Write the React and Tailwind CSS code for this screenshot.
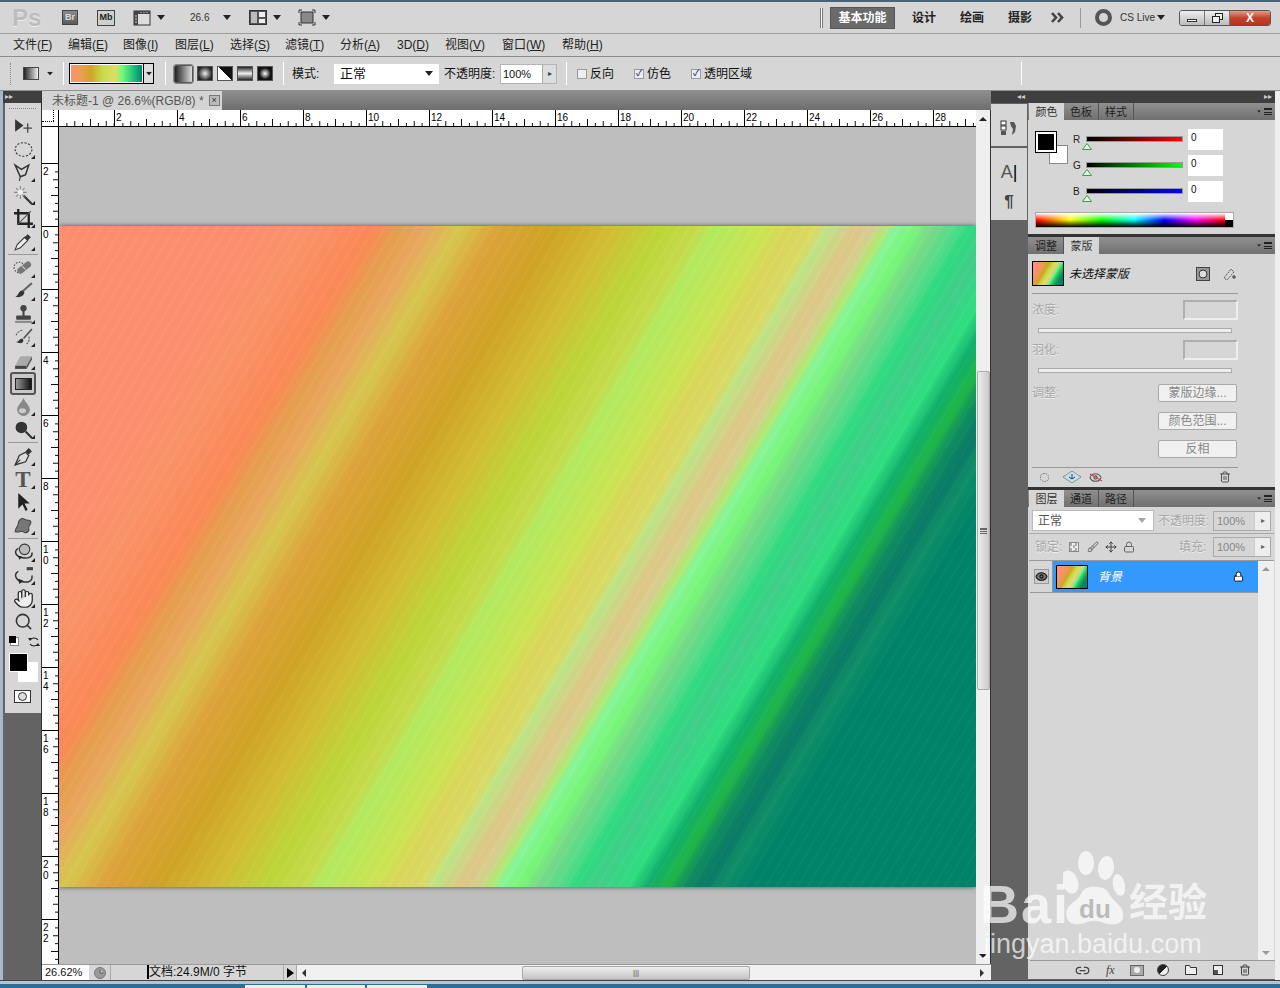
import React from 'react';
import { Hand, Search, Lock, Trash2, Eye, Link2, Move, Brush } from 'lucide-react';

const docGradient = "bg-[repeating-linear-gradient(121deg,rgba(255,255,255,.018)_0px,rgba(255,255,255,.018)_2px,rgba(0,0,0,.012)_2px,rgba(0,0,0,.012)_9px),linear-gradient(121deg,#ff9070_0%,#ff9070_15%,#fb9468_19%,#fd8a58_24%,#e8a050_26%,#eba860_28%,#d8c850_30.6%,#dfa43c_33.5%,#d0a526_37.8%,#d4bd35_42%,#bed83a_46%,#c8dc4c_48.6%,#b4ec60_50%,#cee654_54%,#dcd85c_55.7%,#dcdc66_57.7%,#bfe688_58.7%,#e0c888_60.8%,#d8d090_62%,#b6ea74_63%,#88f898_63.8%,#78f878_65.3%,#78dc88_66.6%,#52de8c_68.4%,#30dc80_69.4%,#40d08c_71.2%,#30e080_73.5%,#10b06c_75%,#20b848_76.5%,#109060_77.7%,#0a7a68_79.3%,#109068_80.6%,#00846a_82.6%,#00846a_100%)]";

const thumbGradient = "bg-[linear-gradient(121deg,#ff9070_0%,#ff9070_20%,#d0a526_38%,#c8dc4c_48%,#e0dc66_57%,#e0c888_60%,#78f878_65%,#30dc80_70%,#20b848_76%,#00846a_85%)]";

const menus = [
  ['文件', 'F', 'w-[55px]'], ['编辑', 'E', 'w-[55px]'], ['图像', 'I', 'w-[52px]'], ['图层', 'L', 'w-[55px]'],
  ['选择', 'S', 'w-[55px]'], ['滤镜', 'T', 'w-[55px]'], ['分析', 'A', 'w-[57px]'], ['3D', 'D', 'w-[48px]'],
  ['视图', 'V', 'w-[57px]'], ['窗口', 'W', 'w-[60px]'], ['帮助', 'H', 'w-[60px]'],
];

const DownArrow = ({ className = '' }) => (
  <svg width="8" height="5" viewBox="0 0 8 5" className={className}><path d="M0 0h8L4 5z" fill="#222" /></svg>
);

const Sep = ({ className = '' }) => <div className={`w-px self-stretch bg-[#a4a4a4] border-r border-white ${className}`} />;

const Check = ({ on, label, className = '' }) => (
  <label className={`flex items-center gap-[3px] ${className}`}>
    <span className="w-[10px] h-[10px] bg-[#eee] border border-[#9a9a9a] flex items-center justify-center text-[#3c4d8e] text-[9px] leading-none font-bold">{on ? '✓' : ''}</span>
    <span className="text-[12px] text-[#111]">{label}</span>
  </label>
);

function AppBar() {
  return (
    <div className="h-[32px] shrink-0 flex items-center bg-[#d6d6d6] border-b border-[#9c9c9c] shadow-[0_1px_0_#eee]">
      <span className="ml-[12px] w-[50px] text-[24px] font-bold text-[#bdbdbd] [text-shadow:0_1px_0_#eee] leading-none">Ps</span>
      <span className="w-[16px] h-[15px] bg-[linear-gradient(#8a8a8a,#5c5c5c)] border border-[#444] text-[9px] text-[#ddd] font-bold flex items-center justify-center">Br</span>
      <span className="ml-[19px] w-[18px] h-[16px] bg-[#cfcfcf] border border-[#444] text-[9px] text-[#222] font-bold flex items-center justify-center">Mb</span>
      <svg width="18" height="16" viewBox="0 0 18 16" className="ml-[18px]"><rect x="1" y="1" width="16" height="14" fill="#ddd" stroke="#333" /><rect x="1" y="1" width="16" height="3" fill="#444" /><rect x="1" y="1" width="4" height="14" fill="#444" /><path d="M2 6h2M2 9h2M2 12h2M8 2v1M11 2v1M14 2v1" stroke="#ddd" /></svg>
      <DownArrow className="ml-[6px]" />
      <span className="ml-[25px] text-[10px] text-[#333] w-[30px]">26.6</span>
      <DownArrow className="ml-[3px]" />
      <svg width="18" height="15" viewBox="0 0 18 15" className="ml-[18px]"><rect x=".5" y=".5" width="17" height="14" fill="#555" stroke="#333" /><rect x="10" y="2" width="6" height="5" fill="#eee" /><rect x="10" y="9" width="6" height="4" fill="#eee" /><rect x="2" y="2" width="6" height="11" fill="#bbb" /></svg>
      <DownArrow className="ml-[6px]" />
      <svg width="18" height="17" viewBox="0 0 18 17" className="ml-[17px]"><path d="M1 4V1h3M14 1h3v3M17 13v3h-3M4 16H1v-3" fill="none" stroke="#333" /><rect x="3" y="3" width="12" height="11" fill="#888" stroke="#333" /></svg>
      <DownArrow className="ml-[6px]" />
      <div className="ml-[490px] w-[3px] h-[20px] border-x border-[#777] bg-white" />
      <span className="ml-[7px] w-[65px] h-[22px] bg-[#6a6a6a] border border-[#555] text-white font-bold text-[12px] flex items-center justify-center">基本功能</span>
      <span className="ml-[17px] text-[12px] font-bold text-[#222] w-[48px]">设计</span>
      <span className="text-[12px] font-bold text-[#222] w-[48px]">绘画</span>
      <span className="text-[12px] font-bold text-[#222] w-[43px]">摄影</span>
      <svg width="15" height="11" viewBox="0 0 15 11" className="mr-[14px]"><path d="M1 1l4 4.5L1 10M7 1l4 4.5L7 10" fill="none" stroke="#444" strokeWidth="2.6" /></svg>
      <div className="w-px h-[20px] bg-[#999]" />
      <span className="ml-[14px] w-[17px] h-[17px] rounded-full border-[4px] border-[#555]" />
      <span className="ml-[8px] text-[10px] text-[#333]">CS Live</span>
      <DownArrow className="ml-[2px]" />
      <div className="ml-[14px] h-[16px] w-[92px] flex rounded-[3px] border border-[#555] overflow-hidden">
        <span className="w-[25px] bg-[linear-gradient(#eee,#bbb)] border-r border-[#777] flex items-end justify-center pb-[3px]"><span className="w-[10px] h-[3px] bg-white border border-[#333]" /></span>
        <span className="w-[25px] bg-[linear-gradient(#eee,#bbb)] border-r border-[#777] flex items-center justify-center">
          <svg width="11" height="10" viewBox="0 0 11 10"><rect x="3.5" y=".5" width="7" height="6" fill="#eee" stroke="#222" /><rect x=".5" y="3.5" width="7" height="6" fill="#eee" stroke="#222" /></svg>
        </span>
        <span className="flex-1 bg-[linear-gradient(#e89a88,#c2422c_50%,#b8331f)] text-white font-bold text-[12px] leading-none flex items-center justify-center">X</span>
      </div>
    </div>
  );
}

function MenuBar() {
  return (
    <div className="h-[22px] shrink-0 flex items-center pl-[13px] bg-[#d6d6d6] text-[12px] text-[#222]">
      {menus.map(([name, key, w]) => (
        <span key={name} className={`${w} whitespace-nowrap`}>{name}(<span className="underline">{key}</span>)</span>
      ))}
    </div>
  );
}

function OptionsBar() {
  return (
    <div className="h-[35px] shrink-0 flex items-center bg-[#d6d6d6] border-y border-[#8e8e8e] pl-[10px] py-[5px] text-[12px] text-[#111]">
      <div className="w-[2px] h-[22px] border-l border-dotted border-[#888]" />
      <span className="ml-[11px] w-[16px] h-[13px] border border-[#444] bg-[linear-gradient(90deg,#222,#eee)]" />
      <DownArrow className="ml-[7px] scale-75" />
      <Sep className="ml-[9px]" />
      <div className="ml-[5px] w-[85px] h-[21px] flex border border-black bg-[#ddd]">
        <span className="w-[73px] bg-[linear-gradient(90deg,#ff9070,#e8a050_15%,#d0a526_28%,#c8dc4c_45%,#e0dc66_62%,#78f878_72%,#20c080_88%,#00846a)] border border-white" />
        <span className="flex-1 flex items-center justify-center border-l border-black"><DownArrow className="scale-75" /></span>
      </div>
      <Sep className="ml-[11px]" />
      <div className="ml-[8px] flex gap-[4px] items-center">
        <span className="w-[19px] h-[18px] border border-[#555] rounded-[2px] bg-[linear-gradient(90deg,#222,#ddd)] outline-1 outline-[#888]" />
        <span className="w-[16px] h-[15px] bg-[radial-gradient(circle,#eee,#222_75%)] border border-[#555]" />
        <span className="w-[16px] h-[15px] bg-[linear-gradient(45deg,#fff_50%,#111_50%)] border border-[#555]" />
        <span className="w-[16px] h-[15px] bg-[linear-gradient(#222,#eee,#222)] border border-[#555]" />
        <span className="w-[16px] h-[15px] bg-[radial-gradient(circle,#fff,#111_60%)] border border-[#555]" />
      </div>
      <Sep className="ml-[10px]" />
      <span className="ml-[8px] w-[42px]">模式:</span>
      <div className="w-[105px] h-[20px] bg-white flex items-center justify-between px-[6px] text-[13px]"><span>正常</span><DownArrow /></div>
      <span className="ml-[5px] w-[56px]">不透明度:</span>
      <div className="w-[57px] h-[20px] flex bg-white border border-[#b4b4b4]">
        <span className="w-[41px] pl-[2px] text-[11px] leading-[18px]">100%</span>
        <span className="flex-1 bg-[#ddd] border-l border-[#aaa] text-[8px] text-[#345] flex items-center justify-center">▸</span>
      </div>
      <Sep className="ml-[9px]" />
      <Check label="反向" className="ml-[10px] w-[57px]" />
      <Check on label="仿色" className="w-[57px]" />
      <Check on label="透明区域" className="w-[79px]" />
      <Sep className="ml-[251px]" />
    </div>
  );
}

const Tool = ({ children, corner = true }) => (
  <div className="relative h-[23px] w-[26px] mx-auto flex items-center justify-center">
    {children}
    {corner && <span className="absolute right-[1px] bottom-[2px] w-0 h-0 border-l-[4px] border-l-transparent border-b-[4px] border-b-[#222]" />}
  </div>
);

const ToolSep = () => <div className="h-[1px] mt-[1px] mb-[2px] mx-[3px] bg-[#999]" />;

const Ico = ({ children }) => <svg width="21" height="21" viewBox="0 0 20 20">{children}</svg>;

function Toolbar() {
  return (
    <div className="ml-[1px] w-[36px] h-[610px] bg-[#d6d6d6] pt-[12px] flex flex-col relative">
      <div className="absolute top-[5px] left-[4px] w-[27px] border-t border-dotted border-[#888]" />
      <Tool corner={false}><Ico><path d="M2 3v12l8-6z" fill="#333" /><path d="M14 7v9M10 11.5h8" stroke="#444" strokeWidth="1.2" /></Ico></Tool>
      <Tool><Ico><ellipse cx="10" cy="10" rx="8" ry="6.5" fill="none" stroke="#333" strokeDasharray="2 1.5" /></Ico></Tool>
      <Tool><Ico><path d="M2 3l6 4 7-4-3 9-5 2z" fill="none" stroke="#333" strokeWidth="1.4" /><path d="M7 14l-1 4" stroke="#333" /></Ico></Tool>
      <Tool><Ico><path d="M10 10l8 8" stroke="#333" strokeWidth="2" /><path d="M7 1v12M1 7h12M3 3l8 8M11 3l-8 8" stroke="#888" /><circle cx="7" cy="7" r="2.6" fill="#eee" /></Ico></Tool>
      <Tool><Ico><path d="M5 1v14h14M1 5h14v14" fill="none" stroke="#222" strokeWidth="2.2" /><path d="M4 16L17 3" stroke="#555" /></Ico></Tool>
      <Tool><Ico><path d="M2 18l2-5 7-7 3 3-7 7z" fill="#eee" stroke="#333" /><path d="M11 6l3-3 3 3-3 3z" fill="#333" /></Ico></Tool>
      <ToolSep />
      <Tool><Ico><circle cx="6" cy="9" r="5" fill="none" stroke="#444" strokeDasharray="1.4 1.4" /><rect x="3" y="6.5" width="15" height="6" rx="3" transform="rotate(-38 10 9)" fill="#777" /><path d="M8 7l4 4" stroke="#ccc" /></Ico></Tool>
      <Tool><Ico><path d="M18 2L9 10" stroke="#666" strokeWidth="2" /><path d="M2 15c3 0 3-6 7-6l2 2c-1 4-5 5-9 4z" fill="#333" /></Ico></Tool>
      <Tool><Ico><circle cx="10" cy="4" r="3" fill="#444" /><rect x="9" y="6" width="2" height="6" fill="#444" /><rect x="3" y="11" width="14" height="4" rx="1" fill="#444" /><rect x="2" y="16" width="16" height="2" fill="#888" /></Ico></Tool>
      <Tool><Ico><path d="M3 14c2 1 3-3 6-3l1 2c-1 3-4 3-7 1z" fill="#333" /><path d="M18 2l-8 9" stroke="#555" strokeWidth="1.6" /><path d="M3 8a8 7 0 0 1 6-5M15 9a6 6 0 0 1-2 7" fill="none" stroke="#555" strokeDasharray="2 1" /></Ico></Tool>
      <Tool><Ico><path d="M2 15l5-9h11l-5 9z" fill="#aaa" /><path d="M2 15h11v3H2z" fill="#444" /><path d="M13 15l5-9v3l-5 9z" fill="#555" /></Ico></Tool>
      <div className="relative h-[23px] flex items-center justify-center">
        <span className="w-[26px] h-[23px] rounded-[3px] border-2 border-[#555] bg-[#c8c8c8] flex items-center justify-center"><span className="w-[17px] h-[12px] bg-[linear-gradient(90deg,#999,#111)] border border-[#222]" /></span>
      </div>
      <Tool><Ico><path d="M10 2c2 5 6 7 6 11a6 6 0 0 1-12 0c0-4 4-6 6-11z" fill="#888" /><ellipse cx="9" cy="14" rx="3.4" ry="2.4" fill="#ccc" /></Ico></Tool>
      <Tool><Ico><circle cx="8" cy="8" r="5.5" fill="#333" /><path d="M12 12l6 6" stroke="#333" strokeWidth="2" /></Ico></Tool>
      <ToolSep />
      <Tool><Ico><path d="M2 18l4-9 6-3 3 3-3 6z" fill="#ddd" stroke="#333" strokeWidth="1.2" /><path d="M12 5l3-3 3 3-3 3z" fill="#333" /><path d="M2 18l5-5" stroke="#333" /></Ico></Tool>
      <Tool><span className="text-[23px] leading-none font-bold text-[#555] [font-family:'Liberation_Serif',serif]">T</span></Tool>
      <Tool><Ico><path d="M5 1v15l4-4 3 6 2-1-3-6h5z" fill="#222" /></Ico></Tool>
      <Tool><Ico><path d="M2 16c0-4 3-5 3-8s3-6 6-4 6 0 6 3-3 3-2 6-3 5-5 3-3 1-8 0z" fill="#777" stroke="#444" /></Ico></Tool>
      <ToolSep />
      <Tool><Ico><circle cx="11" cy="7" r="5" fill="#bbb" stroke="#333" /><path d="M5 6C0 9 3 14 9 15s10-1 9-5" fill="none" stroke="#333" strokeWidth="1.4" /><path d="M5 13l4 1-3 3z" fill="#222" /></Ico></Tool>
      <Tool><Ico><path d="M5 6C0 9 3 15 9 16s10-1 9-6" fill="none" stroke="#333" strokeWidth="1.4" /><path d="M5 13l5 2-4 3z" fill="#222" /><rect x="13" y="2" width="6" height="3" fill="#444" /></Ico></Tool>
      <Tool><Hand size={21} strokeWidth={1.4} color="#222" fill="#eee" /></Tool>
      <Tool corner={false}><Search size={19} strokeWidth={2} color="#333" /></Tool>
      <div className="h-[15px] mt-[1px] flex items-center pl-[5px] gap-[9px]">
        <span className="relative w-[9px] h-[9px] bg-white border border-[#888]"><span className="absolute -left-[2px] -top-[2px] w-[7px] h-[7px] bg-black" /></span>
        <svg width="12" height="12" viewBox="0 0 12 12"><path d="M2 4a5 5 0 0 1 8 0M10 8a5 5 0 0 1-8 0" fill="none" stroke="#222" strokeWidth="1.2" /><path d="M0 2l4 0-2 3zM12 10l-4 0 2-3z" fill="#222" /></svg>
      </div>
      <div className="relative h-[30px] mt-[4px]">
        <span className="absolute left-[13px] top-[9px] w-[20px] h-[20px] bg-white" />
        <span className="absolute left-[4px] top-0 w-[19px] h-[19px] bg-black border border-white" />
      </div>
      <span className="mt-[7px] ml-[9px] w-[17px] h-[13px] bg-white border border-[#333] flex items-center justify-center"><span className="w-[9px] h-[9px] rounded-full border border-[#333] bg-[#ddd]" /></span>
    </div>
  );
}

const Ticks = () => (
  <svg width="63" height="7" className="absolute left-0 bottom-0">
    {[1, 2, 3, 4, 5, 6, 7].map(i => (
      <line key={i} x1={i * 7.875} x2={i * 7.875} y1={i === 4 ? 0 : i % 2 ? 4 : 2} y2={7} stroke="#111" />
    ))}
  </svg>
);

const VTicks = () => (
  <svg width="7" height="63" className="absolute right-0 top-0">
    {[1, 2, 3, 4, 5, 6, 7].map(i => (
      <line key={i} y1={i * 7.875} y2={i * 7.875} x1={i === 4 ? 0 : i % 2 ? 4 : 2} x2={7} stroke="#111" />
    ))}
  </svg>
);

const hLabels = [2, 4, 6, 8, 10, 12, 14, 16, 18, 20, 22, 24, 26, 28];
const vLabels = ['2', '0', '2', '4', '6', '8', '10', '12', '14', '16', '18', '20', '22'];

function Canvas() {
  return (
    <div className="flex-1 flex flex-col min-w-0">
      <div className="h-[17px] flex bg-white border-b border-black overflow-hidden shrink-0">
        <div className="w-[17px] shrink-0 border-r border-black relative">
          <span className="absolute left-0 right-[4px] top-[11px] border-t border-dotted border-black" />
          <span className="absolute right-[4px] top-0 bottom-[5px] border-l border-dotted border-black" />
        </div>
        <div className="w-[55px] shrink-0 relative overflow-hidden"><Ticks /></div>
        {hLabels.map(n => (
          <div key={n} className="w-[63px] shrink-0 relative border-l border-black pl-[1px] pt-[3px] text-[10px] leading-[10px] text-black">
            {n}
            <Ticks />
          </div>
        ))}
      </div>
      <div className="flex-1 flex min-h-0">
        <div className="w-[17px] shrink-0 bg-white border-r border-black overflow-hidden flex flex-col">
          <div className="h-[36px] shrink-0" />
          {vLabels.map((n, i) => (
            <div key={i} className="h-[63px] shrink-0 relative border-t border-black pl-[1px] pt-[2px] text-[10px] leading-[11px] text-black">
              {n.split('').map((c, j) => <div key={j}>{c}</div>)}
              <VTicks />
            </div>
          ))}
        </div>
        <div className="flex-1 bg-[#bebebe] flex flex-col overflow-hidden pt-[99px]">
          <div className={`h-[661px] shrink-0 ${docGradient} shadow-[0_0_5px_rgba(0,0,0,.6)]`} />
        </div>
      </div>
    </div>
  );
}

function VScroll() {
  return (
    <div className="w-[15px] bg-[#efefef] border-r border-[#333] flex flex-col items-center">
      <span className="mt-[7px] w-0 h-0 border-x-[4px] border-x-transparent border-b-[4px] border-b-[#222]" />
      <div className="mt-[250px] w-[13px] h-[319px] rounded-[2px] border border-[#aaa] bg-[linear-gradient(90deg,#eee,#c8c8c8)] flex items-center justify-center">
        <span className="w-[7px] h-[6px] border-y border-[#666] bg-[linear-gradient(#666_1px,transparent_1px)] bg-[length:100%_2px]" />
      </div>
      <span className="mt-auto mb-[6px] w-0 h-0 border-x-[4px] border-x-transparent border-t-[4px] border-t-[#222]" />
    </div>
  );
}

function StatusBar() {
  return (
    <div className="h-[16px] shrink-0 flex bg-[#d6d6d6] border-t border-[#999] text-[12px] text-[#111]">
      <span className="w-[47px] bg-white pl-[3px] text-[11px] leading-[15px]">26.62%</span>
      <span className="w-[22px] flex items-center justify-center border-r border-[#aaa]">
        <svg width="12" height="12" viewBox="0 0 12 12"><circle cx="6" cy="6" r="5.5" fill="#999" stroke="#777" /><path d="M6 2.5v3.5h3.5" fill="#ddd" stroke="#555" /></svg>
      </span>
      <span className="w-[173px] pl-[36px] leading-[15px] whitespace-nowrap border-r border-[#aaa]"><span className="border-l-2 border-black">文档:24.9M/0 字节</span></span>
      <span className="w-[13px] flex items-center justify-center border-r border-[#aaa]"><span className="w-0 h-0 border-y-[5px] border-y-transparent border-l-[7px] border-l-black" /></span>
      <div className="flex-1 bg-[#f0f0f0] flex items-center relative">
        <span className="ml-[5px] w-0 h-0 border-y-[4px] border-y-transparent border-r-[4px] border-r-[#333]" />
        <span className="absolute left-[225px] w-[228px] h-[14px] rounded-[2px] border border-[#aaa] bg-[linear-gradient(#eee,#c4c4c4)] flex items-center justify-center text-[8px] leading-none text-[#555]">|||</span>
        <span className="ml-auto mr-[7px] w-0 h-0 border-y-[4px] border-y-transparent border-l-[4px] border-l-[#333]" />
      </div>
    </div>
  );
}

const Tabs = ({ items, active }) => (
  <div className="h-[17px] shrink-0 flex bg-[linear-gradient(#909090,#707070)] pl-px relative text-[11px]">
    {items.map((t, i) => (
      <span key={t} className={`w-[35px] pt-px flex items-center justify-center ${i === active ? 'bg-[#d6d6d6] text-[#333]' : 'text-[#222] border-r border-[#555]'}`}>{t}</span>
    ))}
    <span className="absolute right-[3px] top-[5px] flex items-center gap-px">
      <DownArrow className="scale-50" />
      <span className="w-[8px] h-[7px] border-y border-[#222] bg-[linear-gradient(#222_1px,transparent_1px)] bg-[length:100%_3px]" />
    </span>
  </div>
);

const channels = [
  ['R', 'bg-[linear-gradient(90deg,#000,#f00)]'],
  ['G', 'bg-[linear-gradient(90deg,#000,#0f0)]'],
  ['B', 'bg-[linear-gradient(90deg,#000,#00f)]'],
];

function ColorPanel() {
  return (
    <>
      <Tabs items={['颜色', '色板', '样式']} active={0} />
      <div className="h-[114px] shrink-0 bg-[#d6d6d6] relative pt-[9px]">
        <span className="absolute left-[21px] top-[25px] w-[19px] h-[19px] bg-white border border-[#888]" />
        <span className="absolute left-[8px] top-[12px] w-[20px] h-[20px] bg-black border-2 border-white outline-1 outline-black" />
        <div className="pl-[45px] flex flex-col gap-[5px]">
          {channels.map(([c, g]) => (
            <div key={c} className="h-[21px] flex text-[10px] text-[#222]">
              <span className="w-[13px] pt-[5px] leading-[12px]">{c}</span>
              <div className="relative w-[97px]">
                <div className={`h-[6px] mt-[7px] border border-[#999] ${g}`} />
                <svg width="10" height="7" viewBox="0 0 10 7" className="absolute left-[-4px] top-[14px]"><path d="M5 .5l4.5 6H.5z" fill="#eee" stroke="#3a9e4a" /></svg>
              </div>
              <div className="ml-[5px] w-[35px] bg-white pl-[3px] text-[10px] leading-[18px] text-[#111]">0</div>
            </div>
          ))}
        </div>
        <div className="mt-[10px] ml-[7px] w-[199px] h-[16px] flex border border-[#aaa]">
          <span className="flex-1 bg-[linear-gradient(180deg,#fff_0%,transparent_50%,#000_100%),linear-gradient(90deg,#f00,#ff0_18%,#0f0_35%,#0ff_52%,#00f_68%,#f0f_84%,#f00)]" />
          <span className="w-[8px] flex flex-col"><span className="flex-1 bg-white" /><span className="flex-1 bg-black" /></span>
        </div>
      </div>
    </>
  );
}

const GhostField = ({ label, className = '' }) => (
  <div className={`flex items-center justify-between h-[20px] ${className}`}>
    <span className="text-[12px] text-[#a6a6a6] [text-shadow:0_1px_0_#eee]">{label}</span>
    <span className="w-[55px] h-[20px] border-2 border-[#aeaeae] border-r-[#eee] border-b-[#eee] bg-[#d6d6d6]" />
  </div>
);

const GhostSlider = () => <div className="h-[5px] mt-[8px] ml-[6px] w-[194px] bg-[#eee] border border-[#aaa]" />;

const GhostBtn = ({ children }) => (
  <span className="w-[79px] h-[18px] shrink-0 rounded-[2px] bg-[#f0f0f0] border border-[#aaa] flex items-center justify-center text-[12px] text-[#888]">{children}</span>
);

function MaskPanel() {
  return (
    <>
      <Tabs items={['调整', '蒙版']} active={1} />
      <div className="h-[233px] shrink-0 bg-[#d6d6d6] px-[4px] pt-[7px] flex flex-col">
        <div className="h-[25px] flex items-center shrink-0">
          <span className={`w-[32px] h-[25px] border border-black ${thumbGradient}`} />
          <span className="ml-[5px] w-[120px] italic text-[12px] text-[#111]">未选择蒙版</span>
          <svg width="14" height="14" viewBox="0 0 14 14" className="ml-[7px]"><rect x=".5" y=".5" width="13" height="13" fill="#999" stroke="#444" /><circle cx="7" cy="7" r="4" fill="#ddd" stroke="#333" /></svg>
          <svg width="14" height="14" viewBox="0 0 14 14" className="ml-[12px]"><path d="M2 11L9 2l3 3-7 8z" fill="none" stroke="#555" strokeDasharray="2 1" /><path d="M10 10h4M12 8v4" stroke="#333" /></svg>
        </div>
        <div className="mt-[7px] h-px w-[206px] bg-[#999]" />
        <GhostField label="浓度:" className="mt-[6px] w-[206px]" />
        <GhostSlider />
        <GhostField label="羽化:" className="mt-[7px] w-[206px]" />
        <GhostSlider />
        <div className="mt-[11px] w-[205px] flex">
          <span className="flex-1 text-[12px] text-[#a6a6a6] [text-shadow:0_1px_0_#eee]">调整:</span>
          <div className="flex flex-col gap-[10px]">
            <GhostBtn>蒙版边缘...</GhostBtn>
            <GhostBtn>颜色范围...</GhostBtn>
            <GhostBtn>反相</GhostBtn>
          </div>
        </div>
        <div className="mt-[9px] h-px w-[206px] bg-[#999]" />
        <div className="h-[16px] mt-[1px] w-[206px] flex items-center">
          <span className="ml-[8px] w-[9px] h-[9px] rounded-full border border-dotted border-[#666]" />
          <svg width="18" height="12" viewBox="0 0 18 12" className="ml-[14px]"><path d="M9 0l9 6-9 6-9-6z" fill="#cde" stroke="#7a9a92" /><path d="M9 3v5M6 6l3 2 3-2" fill="none" stroke="#245" /></svg>
          <span className="ml-[8px] relative flex"><Eye size={13} color="#555" /><span className="absolute left-0 top-[6px] w-[14px] h-px bg-[#d44] rotate-[30deg]" /></span>
          <Trash2 size={12} color="#555" className="ml-auto mr-[7px]" />
        </div>
      </div>
    </>
  );
}

const GhostBox = () => (
  <div className="w-[58px] h-[20px] flex border border-[#aaa] bg-[#eee] text-[11px] text-[#888]">
    <span className="w-[41px] bg-[#d6d6d6] border-r border-[#ccc] pl-[3px] leading-[18px]">100%</span>
    <span className="flex-1 flex items-center justify-center text-[8px] text-[#666]">▸</span>
  </div>
);

function LayersPanel() {
  return (
    <div className="flex-1 flex flex-col min-h-0">
      <Tabs items={['图层', '通道', '路径']} active={0} />
      <div className="flex-1 bg-[#d6d6d6] flex flex-col min-h-0">
        <div className="h-[27px] shrink-0 flex items-center pt-[1px] pl-[3px] border-b border-[#aaa] mx-[1px]">
          <div className="w-[122px] h-[21px] bg-white border border-[#bbb] flex items-center justify-between pl-[5px] pr-[7px] text-[12px] text-[#555]"><span>正常</span><DownArrow className="opacity-40" /></div>
          <span className="ml-[4px] w-[55px] text-[12px] text-[#a6a6a6] [text-shadow:0_1px_0_#eee]">不透明度:</span>
          <GhostBox />
        </div>
        <div className="h-[27px] shrink-0 flex items-center pl-[6px] border-b border-[#999] mx-[1px]">
          <span className="w-[34px] text-[12px] text-[#a6a6a6] [text-shadow:0_1px_0_#eee]">锁定:</span>
          <span className="w-[10px] h-[10px] mr-[8px] border border-[#888] bg-[conic-gradient(#eee_25%,#aaa_0_50%,#eee_0_75%,#aaa_0)] bg-[length:5px_5px]" />
          <Brush size={12} color="#666" className="mr-[6px]" />
          <Move size={12} color="#444" className="mr-[6px]" />
          <Lock size={12} color="#666" className="mr-[44px]" />
          <span className="w-[34px] text-[12px] text-[#a6a6a6] [text-shadow:0_1px_0_#eee]">填充:</span>
          <GhostBox />
        </div>
        <div className="flex-1 flex min-h-0">
          <div className="w-[230px] flex flex-col pl-[2px]">
            <div className="h-[32px] flex border-b border-[#999]">
              <span className="w-[23px] flex items-center justify-center border-r border-[#999]">
                <span className="w-[15px] h-[15px] bg-[#ccc] border border-[#999] flex items-center justify-center"><Eye size={13} color="#111" fill="#777" /></span>
              </span>
              <div className="flex-1 bg-[#3399ff] flex items-center pl-[3px]">
                <span className={`w-[32px] h-[24px] border border-black ${thumbGradient}`} />
                <span className="ml-[10px] italic text-[12px] text-white">背景</span>
                <Lock size={11} color="#111" fill="#fff" className="ml-[111px]" />
              </div>
            </div>
          </div>
          <div className="flex-1 bg-[#efefef] flex flex-col items-center mr-px">
            <span className="mt-[6px] w-0 h-0 border-x-[4px] border-x-transparent border-b-[4px] border-b-[#999]" />
            <span className="mt-auto mb-[5px] w-0 h-0 border-x-[4px] border-x-transparent border-t-[4px] border-t-[#999]" />
          </div>
        </div>
        <div className="h-[19px] shrink-0 flex items-center border-t border-[#999] ml-[2px] pl-[45px] text-[#444]">
          <Link2 size={15} className="mr-[16px]" />
          <span className="italic text-[12px] [font-family:'Liberation_Serif',serif] w-[24px]">fx</span>
          <span className="w-[14px] h-[11px] bg-[#aaa] border border-[#666] flex items-center justify-center mr-[13px]"><span className="w-[6px] h-[6px] bg-[#eee] rounded-full" /></span>
          <span className="w-[12px] h-[12px] rounded-full bg-[linear-gradient(135deg,#222_50%,#eee_50%)] border border-[#444] mr-[16px]" />
          <svg width="12" height="10" viewBox="0 0 12 10" className="mr-[16px]"><path d="M.5 9.5v-9h4l1 2h6v7z" fill="#eee" stroke="#333" /></svg>
          <svg width="10" height="10" viewBox="0 0 10 10" className="mr-[16px]"><rect x=".5" y=".5" width="9" height="9" fill="#eee" stroke="#333" /><rect x="1" y="5" width="4" height="4" fill="#555" /></svg>
          <Trash2 size={12} />
        </div>
      </div>
    </div>
  );
}

function Watermark() {
  return (
    <div className="absolute left-0 top-0 w-0 h-0 text-white/70">
      <span className="absolute left-[980px] top-[874px] text-[54px] font-bold leading-[60px] tracking-[2px]">Bai</span>
      <svg width="62" height="80" viewBox="0 0 62 80" className="absolute left-[1063px] top-[848px]">
        <g fill="#fff" fillOpacity=".7">
          <ellipse cx="23" cy="15" rx="8" ry="12" />
          <ellipse cx="43" cy="20" rx="8" ry="12" transform="rotate(8 43 20)" />
          <ellipse cx="7" cy="34" rx="8" ry="12" transform="rotate(-20 7 34)" />
          <ellipse cx="56" cy="37" rx="6" ry="11" transform="rotate(-12 56 37)" />
          <path d="M4 70c-4-14 10-14 15-26 3-7 22-7 26 0 6 12 17 13 15 26-2 8-13 7-19 5-8-3-13-3-20 0-6 2-15 2-17-5z" />
        </g>
      </svg>
      <span className="absolute left-[1079px] top-[894px] text-[26px] font-bold leading-[30px] text-[#bbb]">du</span>
      <span className="absolute left-[1129px] top-[880px] text-[39px] font-bold leading-[46px] whitespace-nowrap">经验</span>
      <span className="absolute left-[984px] top-[927px] text-[27px] leading-[34px] whitespace-nowrap">jingyan.baidu.com</span>
    </div>
  );
}

export default function App() {
  return (
    <div className="relative w-[1280px] h-[988px] overflow-hidden flex flex-col bg-[#d6d6d6] [font-family:'Liberation_Sans','Noto_Sans_CJK_SC',sans-serif]">
      <div className="h-[2px] shrink-0 bg-[#4a6378]" />
      <AppBar />
      <MenuBar />
      <OptionsBar />
      <div className="flex-1 flex min-h-0">
        {/* left dock */}
        <div className="w-[42px] shrink-0 flex flex-col pl-[1px] bg-[#636363] border-l-[3px] border-l-[#a9b8c4] border-r border-r-[#333]">
          <div className="h-[12px] shrink-0 bg-[#3f3f3f] text-[8px] text-[#ccc] leading-[12px] pl-[2px] -ml-[1px]">▸▸</div>
          <Toolbar />
        </div>
        {/* document */}
        <div className="flex-1 flex flex-col min-w-0">
          <div className="h-[19px] shrink-0 flex bg-[linear-gradient(#8d8d8d,#6e6e6e)]">
            <div className="w-[180px] bg-[#d4d4d4] flex items-center pl-[10px] text-[12px] text-[#555] whitespace-nowrap">
              未标题-1 @ 26.6%(RGB/8) *
              <span className="ml-[5px] w-[11px] h-[11px] border border-[#777] bg-[#bbb] text-[9px] leading-[9px] text-center text-[#333]">×</span>
            </div>
          </div>
          <div className="flex-1 flex min-h-0">
            <Canvas />
            <VScroll />
          </div>
          <StatusBar />
        </div>
        {/* right dock */}
        <div className="w-[289px] shrink-0 flex flex-col bg-[#636363] border-r-[5px] border-r-[#eee]">
          <div className="h-[12px] shrink-0 bg-[#3f3f3f] text-[8px] text-[#ccc] leading-[12px] flex justify-between pl-[26px] pr-[3px]"><span>◂◂</span><span>▸▸</span></div>
          <div className="flex-1 flex min-h-0">
            <div className="w-[37px] shrink-0 pt-[1px] pr-px flex flex-col gap-[2px]">
              <div className="h-[42px] bg-[#d6d6d6] flex items-center justify-center pt-[6px]">
                <svg width="18" height="16" viewBox="0 0 18 16"><rect x="1" y="1" width="5" height="4" fill="#fff" stroke="#333" /><rect x="1" y="6" width="5" height="4" fill="#fff" stroke="#333" /><rect x="1" y="11" width="5" height="4" fill="#555" /><path d="M10 2h4l2 4-1 6-3 3 1-6-2-3z" fill="#555" /></svg>
              </div>
              <div className="h-[72px] bg-[#d6d6d6] flex flex-col items-center pt-[14px] gap-[10px]">
                <span className="text-[18px] leading-[20px] text-[#555]">A<span className="text-black font-light">|</span></span>
                <span className="text-[17px] leading-[20px] text-[#444] font-bold">¶</span>
              </div>
            </div>
            <div className="flex-1 flex flex-col min-w-0 pb-[1px]">
              <ColorPanel />
              <div className="h-[3px] shrink-0 bg-[#333]" />
              <MaskPanel />
              <div className="h-[3px] shrink-0 bg-[#333]" />
              <LayersPanel />
            </div>
          </div>
        </div>
      </div>
      {/* window frame and task bar */}
      <div className="h-[8px] shrink-0 bg-[#d6d6d6] border-t border-[#444] flex flex-col">
        <div className="h-[3px] bg-[#b8c4cc]" />
        <div className="flex-1 bg-[#2c6f96] flex pl-[245px] gap-[2px] items-end">
          <span className="w-[60px] h-[3px] bg-[#eee]" />
          <span className="w-[58px] h-[3px] bg-[#eee]" />
          <span className="w-[60px] h-[3px] bg-[#eee]" />
        </div>
      </div>
      <Watermark />
    </div>
  );
}
